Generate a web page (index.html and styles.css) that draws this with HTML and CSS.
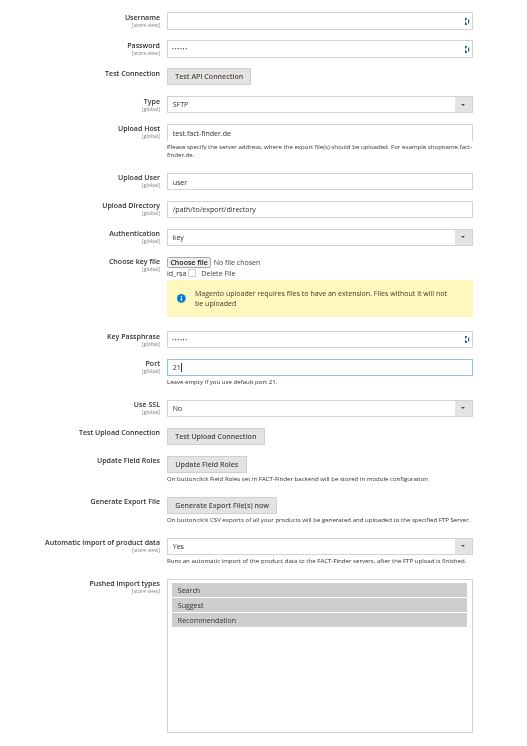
FILE: index.html
```html
<!DOCTYPE html>
<html lang="en">
<head>
<meta charset="utf-8">
<title>FACT-Finder configuration</title>
<link rel="stylesheet" href="styles.css">
</head>
<body>
<form class="form">
  <div class="row">
    <div class="label"><label>Username</label><span class="scope">[store view]</span></div>
    <div class="control"><div class="keyed"><input class="input" type="text"><svg class="key" viewBox="0 0 5 7"><path d="M0 0h2v1.6H1v1H0zM0 4.2h1v1h1V7H0zM3 1.5h1.2v4H3z" fill="#1d5f70"/></svg></div></div>
  </div>
  <div class="row">
    <div class="label"><label>Password</label><span class="scope">[store view]</span></div>
    <div class="control"><div class="keyed"><input class="input input-secret" type="password" value="••••••"><svg class="key" viewBox="0 0 5 7"><path d="M0 0h2v1.6H1v1H0zM0 4.2h1v1h1V7H0zM3 1.5h1.2v4H3z" fill="#1d5f70"/></svg></div></div>
  </div>
  <div class="row">
    <div class="label"><label>Test Connection</label></div>
    <div class="control"><button class="btn" type="button">Test API Connection</button></div>
  </div>
  <div class="row">
    <div class="label"><label>Type</label><span class="scope">[global]</span></div>
    <div class="control"><div class="select"><span class="select-value">SFTP</span><span class="arrow"></span></div></div>
  </div>
  <div class="row row-note">
    <div class="label"><label>Upload Host</label><span class="scope">[global]</span></div>
    <div class="control"><input class="input input-open" type="text" value="test.fact-finder.de"><p class="note">Please specify the server address, where the export file(s) should be uploaded. For example shopname.fact-finder.de.</p></div>
  </div>
  <div class="row">
    <div class="label"><label>Upload User</label><span class="scope">[global]</span></div>
    <div class="control"><input class="input" type="text" value="user"></div>
  </div>
  <div class="row">
    <div class="label"><label>Upload Directory</label><span class="scope">[global]</span></div>
    <div class="control"><input class="input" type="text" value="/path/to/export/directory"></div>
  </div>
  <div class="row">
    <div class="label"><label>Authentication</label><span class="scope">[global]</span></div>
    <div class="control"><div class="select"><span class="select-value">key</span><span class="arrow"></span></div></div>
  </div>
  <div class="row row-note">
    <div class="label"><label>Choose key file</label><span class="scope">[global]</span></div>
    <div class="control">
      <div class="file-line"><span class="file-btn">Choose file</span><span>No file chosen</span></div>
      <div class="delete-line"><span>id_rsa</span><span class="check"></span><span class="delete-text">Delete File</span></div>
      <div class="message"><svg class="info" viewBox="0 0 16 16"><circle cx="8" cy="8" r="8" fill="#007bdb"/><rect x="6.9" y="7" width="2.4" height="5.4" fill="#fff"/><circle cx="8.1" cy="4.7" r="1.4" fill="#fff"/></svg><p>Magento uploader requires files to have an extension. Files without it will not be uploaded</p></div>
    </div>
  </div>
  <div class="row">
    <div class="label"><label>Key Passphrase</label><span class="scope">[global]</span></div>
    <div class="control"><div class="keyed"><input class="input input-secret" type="password" value="••••••"><svg class="key" viewBox="0 0 5 7"><path d="M0 0h2v1.6H1v1H0zM0 4.2h1v1h1V7H0zM3 1.5h1.2v4H3z" fill="#1d5f70"/></svg></div></div>
  </div>
  <div class="row row-note">
    <div class="label"><label>Port</label><span class="scope">[global]</span></div>
    <div class="control"><div class="input input-focus">21<span class="caret"></span></div><p class="note">Leave empty if you use default port 21.</p></div>
  </div>
  <div class="row">
    <div class="label"><label>Use SSL</label><span class="scope">[global]</span></div>
    <div class="control"><div class="select"><span class="select-value">No</span><span class="arrow"></span></div></div>
  </div>
  <div class="row">
    <div class="label"><label>Test Upload Connection</label></div>
    <div class="control"><button class="btn" type="button">Test Upload Connection</button></div>
  </div>
  <div class="row row-note">
    <div class="label"><label>Update Field Roles</label></div>
    <div class="control"><button class="btn" type="button">Update Field Roles</button><p class="note">On buttonclick Field Roles set in FACT-Finder backend will be stored in module configuration</p></div>
  </div>
  <div class="row row-note">
    <div class="label"><label>Generate Export File</label></div>
    <div class="control"><button class="btn" type="button">Generate Export File(s) now</button><p class="note">On buttonclick CSV exports of all your products will be generated and uploaded to the specified FTP Server.</p></div>
  </div>
  <div class="row row-note">
    <div class="label"><label>Automatic import of product data</label><span class="scope">[store view]</span></div>
    <div class="control"><div class="select"><span class="select-value">Yes</span><span class="arrow"></span></div><p class="note">Runs an automatic import of the product data to the FACT-Finder servers, after the FTP upload is finished.</p></div>
  </div>
  <div class="row">
    <div class="label"><label>Pushed import types</label><span class="scope">[store view]</span></div>
    <div class="control">
      <div class="multi">
        <div class="option">Search</div>
        <div class="option">Suggest</div>
        <div class="option">Recommendation</div>
      </div>
    </div>
  </div>
</form>
</body>
</html>
```
FILE: styles.css
```css
* { box-sizing: border-box; }
html, body { margin: 0; padding: 0; background: #fff; }
body {
  height: 746px;
  overflow: hidden;
  font-family: "Open Sans", "Noto Sans", sans-serif;
  color: #303030;
  font-size: 7.05px;
}
.form { padding-top: 12.3px; filter: blur(0.3px); }
.row {
  display: grid;
  grid-template-columns: 160px 305.7px;
  column-gap: 7px;
  margin-bottom: 10.5px;
}
.row-note { margin-bottom: 14px; }
.label { text-align: right; padding-top: 0.6px; }
.label label { display: block; font-weight: 600; font-size: 7.05px; line-height: 9px; color: #303030; }
.scope { display: block; font-size: 5.2px; line-height: 6.5px; color: #808080; }
.control { min-width: 0; }
.input {
  display: block;
  width: 100%;
  height: 17.4px;
  margin: 0;
  padding: 0 4.7px;
  border: 1px solid #d2d2d2;
  border-radius: 0;
  background: #fff;
  font: 7.05px/15.4px "Open Sans", sans-serif;
  color: #303030;
  outline: 0;
}
.input-secret { padding-left: 4px; font-size: 5px; letter-spacing: 0.75px; }
.input-open { border-bottom: 0; }
.input-focus { border-color: #8cc2ea; }
.caret { display: inline-block; width: 1px; height: 9px; margin-left: 0.5px; vertical-align: -2px; background: #303030; }
.keyed { position: relative; }
.key { position: absolute; right: 2.7px; top: 5.4px; width: 5px; height: 7px; }
.btn {
  display: block;
  height: 17.4px;
  margin: 0;
  padding: 0 7.3px;
  border: 1px solid #cfcfcf;
  border-radius: 0;
  background: #e3e3e3;
  font: 600 7.05px/15px "Open Sans", sans-serif;
  color: #514943;
}
.select { display: flex; height: 17.4px; border: 1px solid #d2d2d2; background: #fff; }
.select-value { flex: 1; padding-left: 4.7px; line-height: 15.4px; font-size: 7.05px; }
.arrow { position: relative; flex: 0 0 17px; background: #e3e3e3; }
.arrow::after {
  content: "";
  position: absolute;
  left: 6.2px;
  top: 6.6px;
  border-style: solid;
  border-width: 2.6px 2.3px 0;
  border-color: #514943 transparent transparent;
}
.note { margin: 0; padding-top: 1.6px; font-size: 6.1px; line-height: 8px; color: #303030; }
.file-line { display: flex; align-items: center; gap: 2.5px; height: 11.2px; font-size: 7.05px; color: #444; }
.file-btn {
  display: block;
  height: 11.2px;
  padding: 0 2.4px;
  border: 1px solid #a8a8a8;
  border-radius: 1.5px;
  background: #efefef;
  font-weight: 600;
  line-height: 9.2px;
  color: #222;
}
.delete-line { display: flex; align-items: center; height: 11.5px; font-size: 7.05px; }
.check { width: 8.4px; height: 8px; margin-left: 1.2px; margin-right: 5.4px; border: 1px solid #d2d2d2; background: #fff; }
.delete-text { color: #444; }
.message {
  display: flex;
  align-items: center;
  height: 37.4px;
  margin-top: 0.4px;
  padding: 0 20px 0 10.3px;
  background: #fdf9be;
}
.info { flex: 0 0 8.7px; width: 8.7px; height: 8.7px; margin-right: 9px; }
.message p { margin: 0; font-size: 7.05px; line-height: 10px; color: #41362f; }
.multi {
  height: 154px;
  padding: 3px 4.4px;
  border: 1px solid #d2d2d2;
  background: #fff;
}
.option {
  height: 14.4px;
  margin-bottom: 0.6px;
  padding-left: 5.4px;
  background: #cecece;
  font-size: 7.05px;
  line-height: 14.4px;
}
```
